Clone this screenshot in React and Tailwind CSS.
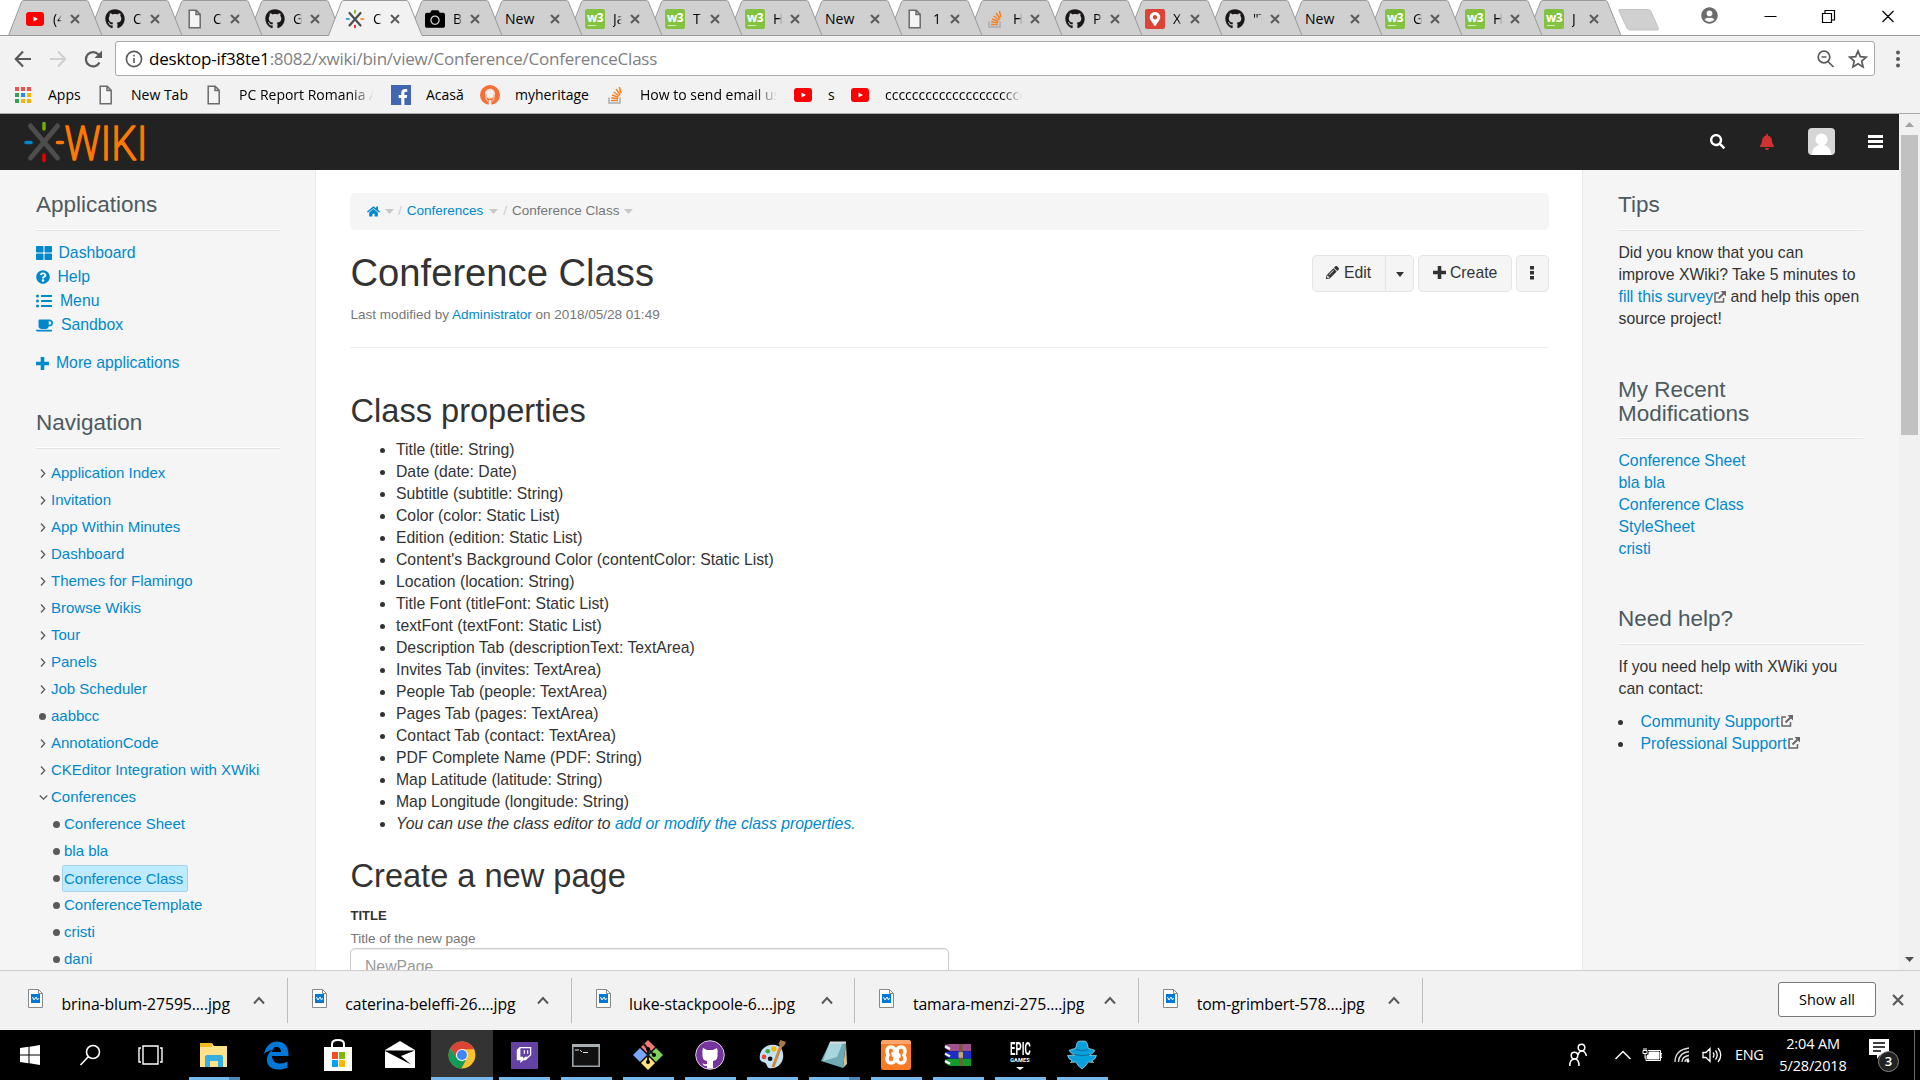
import React from "react";
import { FaGithub, FaHome, FaTwitch, FaPencilAlt, FaQuestionCircle, FaThLarge, FaListUl, FaCoffee, FaSearch, FaBell, FaUserCircle, FaFacebookF, FaCamera, FaMapMarkerAlt } from "react-icons/fa";

const FileIcon = () => (
  <svg width="20" height="20" viewBox="0 0 20 20" fill="#f4f4f4" stroke="#6b6b6b" strokeWidth="1.5">
    <path d="M4.2 1.2h7l4 4.2v13.4h-11z M11 1.2v4.4h4.2" />
  </svg>
);
const YouTube = () => (
  <svg width="20" height="20" viewBox="0 0 20 20">
    <rect x="1" y="3" width="18" height="14" rx="3" fill="#f00" />
    <path d="M8.500 7.500l4.500 2.500-4.500 2.500z" fill="#fff" />
  </svg>
);
const XMark = () => (
  <svg width="20" height="20" viewBox="0 0 20 20" strokeWidth="2.2" strokeLinecap="round">
    <path d="M4.5 4l11 12.500M15.500 4l-11 12.500" stroke="#4d4d4d" />
    <g strokeWidth="1.600"><path d="M10 1.500v2.500" stroke="#73ad0d" /><path d="M10 16.500v2" stroke="#f00" />
    <path d="M1.500 10h2.500" stroke="#08c" /><path d="M16 10h2.500" stroke="#ff7a00" /></g>
  </svg>
);
const W3 = () => (
  <span className="flex h-5 w-5 flex-col items-center overflow-hidden rounded-[2px] bg-[#84c341] pt-[3px] font-['Open_Sans',sans-serif] text-[12px] leading-[12px] font-bold tracking-[-0.5px] text-white">
    w3
    <span className="mt-px ml-[3px] h-px w-[8px] self-start bg-[#d3eab8]" />
  </span>
);
const Stack = () => (
  <svg width="20" height="20" viewBox="0 0 20 20" fill="none" strokeWidth="1.5">
    <path d="M4 12.500v5.500h11v-5.500" stroke="#a9abae" />
    <path d="M6 15.500h7M6.200 12.800l6.900.9M7 10l6.400 2.300M8.600 7l5.700 4M11 4l4.200 5.700M14.300 2l1.700 6" stroke="#f48024" />
  </svg>
);
const RedMap = () => (
  <span className="flex h-5 w-5 items-center justify-center rounded-[2px] bg-[#db4437] text-white"><FaMapMarkerAlt size={14} /></span>
);
const Heritage = () => (
  <svg width="20" height="20" viewBox="0 0 20 20">
    <circle cx="10" cy="10" r="10" fill="#f47038" />
    <circle cx="10" cy="8.800" r="4.200" fill="#f47038" stroke="#fde3d6" strokeWidth="1.600" />
    <circle cx="10" cy="8.800" r="3.800" fill="#f2f2f2" />
    <path d="M6 8.500v5l2 3M14 8.500v5l-2 3" stroke="#f9c3a9" strokeWidth="1.200" fill="none" />
    <path d="M8.700 15h2.600v5H8.700z" fill="#f2f2f2" />
  </svg>
);

const icons = {
  yt: <YouTube />,
  gh: <FaGithub size={20} color="#1b1817" />,
  file: <FileIcon />,
  xw: <XMark />,
  cam: <FaCamera size={20} color="#000" />,
  w3: <W3 />,
  so: <Stack />,
  map: <RedMap />,
};

const tabs = [
  ["yt", "(4"], ["gh", "C"], ["file", "C"], ["gh", "G"], ["xw", "C"], ["cam", "B"], [null, "New"],
  ["w3", "Ja"], ["w3", "T"], ["w3", "H"], [null, "New"], ["file", "1"], ["so", "H"], ["gh", "P"],
  ["map", "X"], ["gh", "\"T"], [null, "New"], ["w3", "G"], ["w3", "H"], ["w3", "J"],
];

function Tab({ icon, label, active, order }) {
  return (
    <div className={"relative h-[36px] shrink-0 " + (order === 12 ? "w-[79px]" : "w-[80px]")} style={{ zIndex: order }}>
      <svg className="absolute top-0 left-0" width="95" height="36" viewBox="0 0 95 36">
        <path d="M0.500 35.500L13.500 2Q14.200 .5 16 .5H78Q79.800 .5 80.500 2L94 35.500" fill={active ? "#f2f2f2" : "#d0d0d0"} stroke="#9a9a9a" />
        {active ? <path d="M1 35.500H94" stroke="#f2f2f2" /> : <path d="M0 35.500H95" stroke="#9a9a9a" />}
      </svg>
      <div className="relative flex h-[37px] items-center pl-[17px]">
        {icon && <span className="w-5 shrink-0">{icons[icon]}</span>}
        <span className={icon ? "ml-2 w-[9px] overflow-hidden text-[14px] text-black [mask-image:linear-gradient(90deg,#000_60%,transparent)]" : "w-[36px] overflow-hidden text-[14px] text-black"}>{label}</span>
        <svg className="absolute top-[14px] left-[62px]" width="10" height="10" viewBox="0 0 10 10" stroke="#5a5a5a" strokeWidth="1.900"><path d="M1 1l8 8M9 1l-8 8" /></svg>
      </div>
    </div>
  );
}

const AppsGrid = () => (
  <div className="grid w-[18px] grid-cols-[4px_4px_4px] gap-[2px] pl-[2px]">
    {["bg-[#ef5350]", "bg-[#ef5350]", "bg-[#ef5350]", "bg-[#34a05a]", "bg-[#2b87f0]", "bg-[#f5b400]", "bg-[#34a05a]", "bg-[#f5b400]", "bg-[#f5b400]"].map((c, i) => (
      <span key={i} className={"h-[4px] w-[4px] " + c} />
    ))}
  </div>
);

const bookmarks = [
  [<AppsGrid />, "Apps", "w-[83px]", ""],
  [<FileIcon />, "New Tab", "w-[108px]", ""],
  [<FileIcon />, "PC Report Romania A", "w-[187px]", "mr-[15px] [mask-image:linear-gradient(90deg,#000_82%,transparent_98%)]"],
  [<span className="flex h-5 w-5 items-end justify-end bg-[#4267b2] text-white"><FaFacebookF size={16} /></span>, "Acasă", "w-[89px]", ""],
  [<Heritage />, "myheritage", "w-[125px]", ""],
  [<Stack />, "How to send email using", "w-[188px]", "mr-[16px] [mask-image:linear-gradient(90deg,#000_85%,transparent)]"],
  [<YouTube />, "s", "w-[57px]", ""],
  [<YouTube />, "cccccccccccccccccccccc", "w-[172px]", "[mask-image:linear-gradient(90deg,#000_85%,transparent)]"],
];

function Chrome() {
  return (
    <header className="h-[114px] shrink-0 border-b border-[#a9a9a9] bg-[#f2f2f2] font-['Open_Sans',sans-serif]">
      <div className="flex h-[36px] bg-white pl-[8px] shadow-[inset_0_-1px_0_#9a9a9a]">
        {tabs.map(([icon, label], i) => (
          <Tab key={i} icon={icon} label={label} active={i === 4} order={i === 4 ? 40 : 30 - i} />
        ))}
        <svg className="mt-[8px] ml-[10px] shrink-0" width="44" height="24" viewBox="0 0 44 24"><path d="M3 1.500h28q2 0 3 2l7.500 17q.5 1.500-1.500 1.500h-27q-2 0-3-2l-8-17q-.5-1.500 1-1.500z" fill="#d0d0d0" stroke="#c2c2c2" /></svg>
        <div className="mr-[26px] ml-auto flex items-start pt-[7px]">
          <FaUserCircle className="mr-[46px]" size={17} color="#6c6c6c" />
          <svg width="130" height="18" viewBox="0 0 130 18" fill="none" stroke="#000" strokeWidth="1.200">
            <path d="M0.500 9.500h12M58.500 6.500h9v9h-9zM61 6v-2.500h9.500v9.500h-3M118.500 4l11 11M129.500 4l-11 11" />
          </svg>
        </div>
      </div>
      <div className="flex h-[45px] items-center pr-[19px] pl-[14px]">
        <svg width="90" height="22" viewBox="0 0 90 22" fill="none" strokeWidth="2.200">
          <path d="M17 11H2M9 3.500L1.800 11 9 18.500" stroke="#5a5a5a" />
          <path d="M36 11H51M44 3.500L51.200 11 44 18.500" stroke="#d0d0d0" />
          <path d="M85.500 14.500A7.200 7.200 0 1 1 84.500 6.500" stroke="#5a5a5a" />
          <path d="M88 2.500V10H80.500z" fill="#5a5a5a" />
        </svg>
        <div className="ml-[11px] flex h-[35px] w-[1760px] items-center rounded-[3px] border border-[#a9a9a9] bg-white pl-[9px]">
          <svg width="18" height="18" viewBox="0 0 18 18" fill="none" stroke="#5a5a5a" strokeWidth="1.600"><circle cx="9" cy="9" r="7.600" /><path d="M9 8v5M9 4.700v1.700" /></svg>
          <span className="mt-px ml-[6px] text-[17px] tracking-[-0.22px] whitespace-nowrap text-[#808080]"><span className="text-black">desktop-if38te1</span>:8082/xwiki/bin/view/Conference/ConferenceClass</span>
          <svg className="mr-[6px] ml-auto" width="52" height="20" viewBox="0 0 52 20" fill="none" stroke="#5a5a5a" strokeWidth="1.700">
            <circle cx="8" cy="8" r="5.800" /><path d="M12 12.500l5.500 5.500M5.500 8h5" />
            <path d="M42 2l2.300 5.600 6 .5-4.600 3.900 1.400 5.900L42 14.800l-5.100 3.100 1.400-5.900-4.600-3.900 6-.5z" />
          </svg>
        </div>
        <svg className="ml-auto" width="6" height="18" viewBox="0 0 6 18" fill="#5a5a5a"><circle cx="3" cy="2.500" r="2" /><circle cx="3" cy="9" r="2" /><circle cx="3" cy="15.500" r="2" /></svg>
      </div>
      <div className="flex h-[27px] items-center pl-[13px] text-[14px] text-black">
        {bookmarks.map(([icon, label, w, cls], i) => (
          <div key={i} className={"flex shrink-0 items-center " + w}>
            <span className="mr-[15px] w-5 shrink-0">{icon}</span>
            <span className={"overflow-hidden whitespace-nowrap " + cls}>{label}</span>
          </div>
        ))}
      </div>
    </header>
  );
}

function TopNav() {
  return (
    <div className="flex h-[56px] shrink-0 items-center bg-[#222] pr-[16px] pb-px pl-[24px]">
      <svg width="124" height="44" viewBox="0 0 124 44" strokeLinecap="round" strokeWidth="3.500">
        <path d="M6.500 6l27 32M33.500 6l-27 32" stroke="#4d4d4d" strokeWidth="5" />
        <path d="M20 3.500v5.500" stroke="#73ad0d" /><path d="M20 35v5.500" stroke="#e60000" />
        <path d="M2 22.500h5" stroke="#08c" /><path d="M33.500 22.500h5" stroke="#ff7a00" />
        <text x="40.500" y="39.500" textLength="83" lengthAdjust="spacingAndGlyphs" fontFamily="Roboto" fontWeight="300" fontSize="49" fill="#ff7a00" stroke="#ff7a00" strokeWidth="1.300" strokeLinejoin="round">WIKI</text>
      </svg>
      <FaSearch className="ml-auto" size={15} color="#fff" />
      <FaBell className="ml-[34px]" size={16} color="#d03232" />
      <svg className="ml-[33px]" width="27" height="27" viewBox="0 0 27 27"><rect width="27" height="27" rx="4" fill="#d6d6d6" /><circle cx="13.500" cy="11.500" r="6" fill="#fff" /><path d="M3.500 27q1-8 7-10h6q6 2 7 10z" fill="#fff" /></svg>
      <svg className="ml-[33px]" width="15" height="15" viewBox="0 0 15 15" fill="#fff"><path d="M0 1h15v3H0zM0 6h15v3H0zM0 11h15v3H0z" /></svg>
    </div>
  );
}

const Heading = ({ children, twoLines }) => (
  <h3 className={"border-b border-[#e2e2e2] text-[22.500px] leading-[24px] text-[#4d5a5f] shadow-[inset_0_-1px_0_#fff] " + (twoLines ? "pb-[12px]" : "pb-[13px]")}>{children}</h3>
);

const apps = [
  [<FaThLarge size={16} />, "Dashboard", "gap-[6.500px]"],
  [<FaQuestionCircle size={14} />, "Help", "gap-[7.500px]"],
  [<FaListUl size={16} />, "Menu", "gap-[8px]"],
  [<FaCoffee size={17} />, "Sandbox", "gap-[8px]"],
];
const nav = ["Application Index", "Invitation", "App Within Minutes", "Dashboard", "Themes for Flamingo", "Browse Wikis", "Tour", "Panels", "Job Scheduler", "aabbcc", "AnnotationCode", "CKEditor Integration with XWiki", "Conferences"];
const subNav = ["Conference Sheet", "bla bla", "Conference Class", "ConferenceTemplate", "cristi", "dani"];

const Dot = () => <span className="h-[7px] w-[7px] rounded-full bg-[#5a5a5a]" />;

function LeftPanel() {
  return (
    <aside className="w-[316px] shrink-0 border-r border-[#e9e9e9] bg-[#f5f5f5] pt-[23px] pr-[35px] pl-[36px] text-[#0088cc]">
      <Heading>Applications</Heading>
      <ul className="mt-[10px]">
        {apps.map(([icon, label, gap]) => (
          <li key={label} className={"flex h-[24px] items-center " + gap}>{icon}{label}</li>
        ))}
      </ul>
      <div className="mt-[14px] flex h-[24px] items-center gap-[7px]">
        <svg width="13" height="13" viewBox="0 0 13 13" fill="currentColor"><path d="M4.700 0h3.600v4.700H13v3.600H8.300V13H4.700V8.300H0V4.700h4.700z" /></svg>
        More applications
      </div>
      <div className="mt-[36px]"><Heading>Navigation</Heading></div>
      <ul className="mt-[11px] text-[15px]">
        {nav.map((label) => (
          <li key={label} className="flex h-[27px] items-center">
            <span className="flex w-[15px] items-center pl-[3px]">
              {label === "aabbcc" ? <Dot /> : (
                <svg width="9" height="9" viewBox="0 0 9 9" fill="none" stroke="#5a5a5a" strokeWidth="1.300">
                  <path d={label === "Conferences" ? "M.8 2.500L4.500 6.200 8.200 2.500" : "M2 .5L5.700 4.500 2 8.500"} />
                </svg>
              )}
            </span>
            {label}
          </li>
        ))}
        {subNav.map((label) => (
          <li key={label} className="flex h-[27px] items-center pl-[17px]">
            <Dot />
            <span className={label === "Conference Class" ? "-mt-px ml-[2px] rounded-[2px] border border-[#a6d5ea] bg-[#beebff] py-[2px] pr-[4px] pl-[1px] leading-[21px]" : "ml-[4px]"}>{label}</span>
          </li>
        ))}
      </ul>
    </aside>
  );
}

const props = [
  "Title (title: String)", "Date (date: Date)", "Subtitle (subtitle: String)", "Color (color: Static List)", "Edition (edition: Static List)",
  "Content's Background Color (contentColor: Static List)", "Location (location: String)", "Title Font (titleFont: Static List)",
  "textFont (textFont: Static List)", "Description Tab (descriptionText: TextArea)", "Invites Tab (invites: TextArea)",
  "People Tab (people: TextArea)", "Pages Tab (pages: TextArea)", "Contact Tab (contact: TextArea)", "PDF Complete Name (PDF: String)",
  "Map Latitude (latitude: String)", "Map Longitude (longitude: String)",
];
const Caret = () => <svg width="9" height="5" viewBox="0 0 9 5" fill="#c8c8c8"><path d="M0 0h9L4.500 5z" /></svg>;
const Bullet = () => <span className="mt-[1px] mr-[11px] h-[5px] w-[5px] rounded-full bg-[#333]" />;
const btn = "flex h-full items-center border border-[#e4e4e4] bg-[#f5f5f5] pb-[2px]";

function Main() {
  return (
    <main className="flex-1 bg-white pt-[23px] pr-[33px] pl-[34px] text-[#333]">
      <div className="flex h-[37px] items-center rounded-[5px] bg-[#f5f5f5] pl-[17px] text-[13.500px] text-[#777]">
        <FaHome size={13} color="#08c" />
        <span className="mr-[4px] ml-[5px]"><Caret /></span><span className="mr-[5px] text-[#ccc]">/</span>
        <span className="text-[#0088cc]">Conferences</span>
        <span className="mr-[5px] ml-[6px]"><Caret /></span><span className="mr-[5px] text-[#ccc]">/</span>
        <span>Conference Class</span><span className="ml-[5px]"><Caret /></span>
      </div>
      <div className="mt-[25px] flex h-[37px] items-center">
        <h1 className="pb-[2px] pl-[0.500px] text-[38.200px] leading-[37px]">Conference Class</h1>
        <div className="ml-auto flex h-full">
          <div className={btn + " w-[74px] gap-[5px] rounded-l-[5px] pl-[13px]"}><FaPencilAlt size={13} />Edit</div>
          <div className={btn + " -ml-px w-[29px] justify-center rounded-r-[5px] pt-[4px]"}><svg width="8" height="5" viewBox="0 0 8 5" fill="#333"><path d="M0 0h8L4 5z" /></svg></div>
          <div className={btn + " ml-[4px] w-[94px] gap-[4px] rounded-[5px] pl-[14px]"}>
            <svg width="13" height="13" viewBox="0 0 13 13" fill="currentColor"><path d="M4.700 0h3.600v4.700H13v3.600H8.300V13H4.700V8.300H0V4.700h4.700z" /></svg>
            Create
          </div>
          <div className={btn + " ml-[4px] w-[33px] justify-center rounded-[5px] pr-px"}><svg width="4" height="14" viewBox="0 0 4 14" fill="#333"><path d="M0 0h4v3.500H0zM0 5h4v3.500H0zM0 10h4v3.500H0z" /></svg></div>
        </div>
      </div>
      <div className="mt-[12px] border-b border-[#eee] pb-[22px] pl-[0.500px] text-[13.540px] leading-[21px] text-[#777]">Last modified by <span className="text-[#0088cc]">Administrator</span> on 2018/05/28 01:49</div>
      <h2 className="mt-[45px] pl-[0.500px] text-[32.600px] leading-[36px]">Class properties</h2>
      <ul className="mt-[10px] pl-[30px]">
        {props.map((p) => (
          <li key={p} className="flex h-[22px] items-center"><Bullet />{p}</li>
        ))}
        <li className="flex h-[22px] items-center"><Bullet /><i>You can use the class editor to <span className="text-[#0088cc]">add or modify the class properties.</span></i></li>
      </ul>
      <h2 className="mt-[23px] pl-[0.500px] text-[32.600px] leading-[36px]">Create a new page</h2>
      <div className="mt-[12px] pl-[0.500px] text-[13px] leading-[20px] font-bold">TITLE</div>
      <div className="mt-[3px] pl-[0.500px] text-[13.540px] leading-[20px] text-[#777]">Title of the new page</div>
      <div className="-mt-px h-[38px] w-[599px] rounded-[5px] border border-[#ccc] px-[14px] text-[15.750px] leading-[36px] text-[#999] shadow-[inset_0_1px_1px_rgba(0,0,0,0.075)]">NewPage</div>
    </main>
  );
}

const Ext = () => (
  <svg className="mb-[2px] ml-[1px] inline" width="12" height="12" viewBox="0 0 12 12" fill="none" stroke="#666" strokeWidth="1.500"><path d="M5 2H1v9h8.500V7" /><path d="M4.500 7.500L9.500 2.500" strokeWidth="2" /><path d="M6.500 0H12v5.500z" fill="#666" stroke="none" /></svg>
);

function RightPanel() {
  return (
    <aside className="w-[317px] shrink-0 border-l border-[#e9e9e9] bg-[#f5f5f5] pt-[23px] pr-[36px] pl-[35px] leading-[22px] text-[#333]">
      <Heading>Tips</Heading>
      <p className="mt-[11px] pl-[0.500px] whitespace-nowrap">Did you know that you can<br />improve XWiki? Take 5 minutes to<br /><span className="text-[#0088cc]">fill this survey</span><Ext /> and help this open<br />source project!</p>
      <div className="mt-[48px]"><Heading twoLines>My Recent<br />Modifications</Heading></div>
      <ul className="mt-[11px] pl-[0.500px] text-[#0088cc]">
        {["Conference Sheet", "bla bla", "Conference Class", "StyleSheet", "cristi"].map((s) => <li key={s}>{s}</li>)}
      </ul>
      <div className="mt-[47px]"><Heading>Need help?</Heading></div>
      <p className="mt-[11px] pl-[0.500px]">If you need help with XWiki you<br />can contact:</p>
      <ul className="mt-[11px] text-[#0088cc]">
        {["Community Support", "Professional Support"].map((s) => (
          <li key={s} className="flex items-center whitespace-nowrap"><span className="mr-[17.500px] h-[5px] w-[5px] rounded-full bg-[#333]" />{s}<Ext /></li>
        ))}
      </ul>
    </aside>
  );
}

const downloads = ["brina-blum-27595....jpg", "caterina-beleffi-26....jpg", "luke-stackpoole-6....jpg", "tamara-menzi-275....jpg", "tom-grimbert-578....jpg"];

function Downloads() {
  return (
    <div className="flex h-[60px] shrink-0 items-center border-t border-[#ccc] bg-[#f2f2f2] pl-[4px] font-['Open_Sans',sans-serif] text-black">
      {downloads.map((d) => (
        <div key={d} className="flex h-[45px] w-[283.800px] shrink-0 items-center border-r border-[#bdbdbd] pl-[24px]">
          <svg className="mb-[4px]" width="15" height="19" viewBox="0 0 15 19"><path d="M.5.5h10l4 4v14H.500z" fill="#fff" stroke="#888" /><path d="M10.500.5v4h4" fill="none" stroke="#888" /><rect x="3" y="5" width="9" height="9" fill="#0078d7" /><path d="M4.500 8l1.500 3 2-3 1.500 3 1-2" stroke="#fff" fill="none" /></svg>
          <span className="mt-[8px] ml-[18.500px] w-[172.500px] text-[15.800px] whitespace-nowrap tracking-[-0.100px]">{d}</span>
          <svg className="ml-[19px]" width="12" height="9" viewBox="0 0 12 9" fill="none" stroke="#5a5a5a" strokeWidth="2"><path d="M1 7.500L6 2l5 5.500" /></svg>
        </div>
      ))}
      <div className="mr-[16px] mb-[2px] ml-auto flex h-[35px] w-[98px] items-center justify-center rounded-[3px] border border-[#777] bg-white text-[14.500px]">Show all</div>
      <svg className="mr-[16px] mb-px" width="12" height="12" viewBox="0 0 12 12" stroke="#5a5a5a" strokeWidth="2.200"><path d="M1 1l10 10M11 1L1 11" /></svg>
    </div>
  );
}

const taskIcons = [
  [<svg width="30" height="30" viewBox="0 0 30 30"><path d="M1 3h12l2 3h13v21H1z" fill="#ffe28a" /><path d="M1 3h12v4H1z" fill="#f5b91f" /><path d="M6 27V17q0-2 2-2h14q2 0 2 2v10h-5v-6h-8v6z" fill="#35aee2" /></svg>, "split"],
  [<svg width="28" height="30" viewBox="0 0 28 30"><path d="M2 14C4 4 11 1.500 15 1.500c8 0 12 6 11.500 14.500H10c0 5 4 7.500 8 7.500 3 0 5.500-.8 7.500-2v6c-3 1.500-6 2-9 2C8 29.500 4 24 5 18c.8-4 3-6.500 6-8-3 .2-6.500 1.500-9 4zm8-2h9c0-3-1.500-5-4.500-5S10.500 9 10 12z" fill="#0078d7" /></svg>, ""],
  [<svg width="30" height="34" viewBox="0 0 30 34"><path d="M9 10V6q0-4 6-4t6 4v4" fill="none" stroke="#fff" strokeWidth="2" /><path d="M1 9h28v24H1z" fill="#fff" /><path d="M9 14h6v7H9z" fill="#f25022" /><path d="M16 14h6v7h-6z" fill="#7fba00" /><path d="M9 22h6v7H9z" fill="#00a4ef" /><path d="M16 22h6v7h-6z" fill="#ffb900" /></svg>, ""],
  [<svg width="32" height="30" viewBox="0 0 32 30"><path d="M1 10L16 1l15 9v18H1z" fill="#fff" /><path d="M1 10.500h30L17 16l10 8.500L1 11z" fill="#000" /></svg>, ""],
  [<svg width="28" height="28" viewBox="0 0 48 48"><circle cx="24" cy="24" r="23" fill="#fbc02d" /><path d="M24 1a23 23 0 0 1 20.500 13H24L15 29 4 12.500A23 23 0 0 1 24 1z" fill="#db4437" /><path d="M4 12.500L15 29l9 5 8-4-9 17A23 23 0 0 1 4 12.500z" fill="#0f9d58" /><circle cx="24" cy="24" r="10.500" fill="#f1f1f1" /><circle cx="24" cy="24" r="8.500" fill="#4285f4" /></svg>, "active"],
  [<span className="flex h-[27px] w-[27px] items-center justify-center bg-[#6441a5] text-white"><FaTwitch size={16} /></span>, "on"],
  [<svg width="28" height="23" viewBox="0 0 28 23"><path d="M.8.8h26.400v21.400H.8z" fill="#111" stroke="#9aa4aa" strokeWidth="1.600" /><path d="M0 0h28v3H0z" fill="#a9b1b5" /><path d="M3 6h4M8 6l2 2M11 8.500h5" stroke="#ddd" /></svg>, "on"],
  [<svg width="32" height="32" viewBox="0 0 32 32"><path d="M16 1l7 7-7 7-7-7z" fill="#f37a78" /><path d="M24 9l7 7-7 7-7-7z" fill="#7fd15a" /><path d="M16 17l7 7-7 7-7-7z" fill="#ffe27a" /><path d="M8 9l7 7-7 7-7-7z" fill="#7aa7f8" /><path d="M11 4l5 6v12M16 10l6 6" stroke="#1b1b1b" strokeWidth="2" fill="none" /><circle cx="16" cy="23" r="2" /><circle cx="22" cy="16" r="2" /><circle cx="16" cy="10" r="2" /></svg>, "on"],
  [<svg width="30" height="30" viewBox="0 0 30 30"><circle cx="15" cy="15" r="14.300" fill="#75359c" stroke="#d9cfe2" /><path d="M8 8l4 2h6l4-2q1 3 .5 5 1 7-4.500 8v7.500h-6V26q-4 .5-4.500-3 2 2 4.500 1v-3q-5.500-1-4.500-8-.5-2 .5-5z" fill="#fff" /></svg>, "on"],
  [<svg width="30" height="30" viewBox="0 0 30 32"><path d="M2 20C1 10 9 5 16 5c8 0 11 6 11 12S22 31 13 30c-4 0-3-5-6-6s-4-1-5-4z" fill="#c3e2f5" /><circle cx="6.500" cy="18" r="2.500" fill="#e3483d" /><circle cx="10.500" cy="12" r="2.500" fill="#3fa845" /><circle cx="17" cy="9.500" r="2.800" fill="#f5b700" /><circle cx="13" cy="20" r="2.500" fill="#111" /><path d="M16 29L25 5" stroke="#d08a3c" strokeWidth="3.200" /><path d="M22 4l2-4 6 2-2 4-3 2z" fill="#a9774a" /></svg>, "on"],
  [<svg width="28" height="28" viewBox="0 0 28 28"><path d="M10 1h16l-3 26L1 20z" fill="#6fa9b6" /><path d="M10 1h13l-6 15-14 4z" fill="#a9d6de" /><path d="M26 2l1 21-4 4z" fill="#d6c48a" /><path d="M10 1.500h16" stroke="#ddd" strokeWidth="2" /></svg>, "split"],
  [<svg width="30" height="30" viewBox="0 0 30 30"><rect width="30" height="30" rx="2.500" fill="#fb7a24" /><path d="M0 4V2.500Q0 0 2.500 0h25Q30 0 30 2.500V4z" fill="#fda66b" /><path d="M14 12c0-4-2-5-4-5-4 0-5 4-3 8-2 4-1 8 3 8s4-3 4-6M16 18c0 4 2 5 4 5 4 0 5-4 3-8 2-4 1-8-3-8s-4 3-4 6M12 13.500q0 3 3 1.500t3 1.500" fill="none" stroke="#fff" strokeWidth="3.600" strokeLinecap="round" /></svg>, "on"],
  [<svg width="28" height="24" viewBox="0 0 28 26" preserveAspectRatio="none"><path d="M1 2l5-1h21v8H6l-5-3z" fill="#a0508f" /><path d="M1 10l5-1h21v8H6l-5-3z" fill="#1b2fc4" /><path d="M1 18l5-1h21v8H6l-5-3z" fill="#139a2b" /><path d="M1 3.500l5 3M1 11.500l5 3M1 19.500l5 3" stroke="#eee" strokeWidth="2.500" /><path d="M15 1h3.500v24H15z" fill="#7b5a33" /><path d="M14.500 10h4.500v6h-4.500z" fill="#c9a768" /></svg>, "on"],
  [<span className="flex flex-col items-center font-[Roboto,sans-serif] leading-none font-bold text-white"><span className="-mx-2 scale-x-[.53] text-[18px]">EPIC</span><span className="text-[5.500px] tracking-[0.200px]">GAMES</span><svg className="mt-[4px]" width="8" height="3" viewBox="0 0 8 3" fill="#fff"><path d="M0 0h8L4 3z" /></svg></span>, "on"],
  [<svg width="32" height="30" viewBox="0 0 32 30" fill="#0aa0dc"><path d="M9.500 8.500L11 3q.5-2 3-2h4q2.500 0 3 2l1.500 5.500q4 .5 6.500 2-2 3.500-6 4.500l7.500.5q-1 4-4.500 5l1.500 2-5.500-.5-2 3.500-4 3.500-4-3.500-2-3.500-5.500.5 1.500-2q-3.500-1-4.500-5L9 15q-4-1-6-4.500 2.500-1.500 6.500-2z" stroke="#d9f2fc" strokeWidth=".6" /><path d="M9.500 9.500q6.500 2.500 13 0M8 14.500q8 2.500 16 0" fill="none" stroke="#0b6f9c" /></svg>, "on"],
];

function Taskbar() {
  return (
    <footer className="flex h-[50px] shrink-0 bg-black font-['Open_Sans',sans-serif] text-white">
      <div className="flex w-[60px] items-center justify-center"><svg width="20" height="20" viewBox="0 0 20 20" fill="#fff"><path d="M0 3l8.500-1.200v7.700H0zM9.500 1.700L20 0v9.500H9.500zM0 10.500h8.500v7.700L0 17zM9.500 10.500H20V20L9.500 18.300z" /></svg></div>
      <div className="flex w-[60px] items-center justify-center"><svg width="22" height="22" viewBox="0 0 22 22" fill="none" stroke="#fff" strokeWidth="1.600"><circle cx="14" cy="8" r="6.500" /><path d="M9.500 12.500L1.500 21" /></svg></div>
      <div className="flex w-[60px] items-center justify-center"><svg width="25" height="20" viewBox="0 0 25 20" fill="none" stroke="#fff" strokeWidth="1.400"><path d="M5 1h15v18H5zM3 3H1v14h2M22 3h2v14h-2" /></svg></div>
      <div className="flex pl-[3px]">
        {taskIcons.map(([icon, state], i) => (
          <div key={i} className={"flex h-[50px] w-[62px] shrink-0 flex-col items-center " + (state === "active" ? "bg-[#333]" : "")}>
            <div className="flex h-[47px] items-center justify-center pt-[3px]">{icon}</div>
            {state !== "" && <div className={"flex h-[3px] justify-end bg-[#76b9ed] " + (state === "active" ? "w-full" : "w-[51px]")}>{state === "split" && <span className="h-full w-[11px] bg-[#4f86b5]" />}</div>}
          </div>
        ))}
      </div>
      <div className="ml-auto flex items-center">
        <svg width="18" height="24" viewBox="0 0 18 24" fill="none" stroke="#fff" strokeWidth="1.500"><circle cx="12.500" cy="4.500" r="3.300" /><path d="M9 12q1-4 4-4t4.500 5" /><circle cx="5.500" cy="12.500" r="3.300" /><path d="M.8 23q0-7 4.700-7t4.500 7" /></svg>
        <svg className="ml-[28px]" width="16" height="10" viewBox="0 0 16 10" fill="none" stroke="#fff" strokeWidth="1.500"><path d="M.5 9L8 1.500 15.500 9" /></svg>
        <svg className="ml-[11px]" width="20" height="16" viewBox="0 0 20 16" fill="none" stroke="#fff"><path d="M6 3.500h12.500v10H4v-5" /><path d="M7 5h10v7H5.500V8H7z" fill="#fff" /><path d="M18.500 6.500h1.500v4h-1.500M1 3.500h4v3H1zM2 1v2M4 1v2M3 6.500v5" /></svg>
        <svg className="ml-[12px]" width="16" height="16" viewBox="0 0 16 16" fill="none" stroke="#ddd" strokeWidth="1.300"><path d="M1 15Q1 3 15 1M4.500 15Q4.500 6 15 4.500M8 15Q8 9.500 15 8.500M11 15q0-3 4-3" /><circle cx="14" cy="14" r="1.500" fill="#fff" stroke="none" /></svg>
        <svg className="ml-[12px]" width="21" height="18" viewBox="0 0 21 18" fill="none" stroke="#fff" strokeWidth="1.300"><path d="M1 6.500h3l4-4v13l-4-4H1zM11 6.500q2 2.500 0 5M13.500 4.500q3.500 4.500 0 9M16 2q5.500 7 0 14" /></svg>
        <span className="ml-[12px] w-[29px] text-[14.500px] tracking-[-0.400px]">ENG</span>
        <div className="ml-[13px] flex w-[72px] flex-col items-center text-[14.500px] leading-[22px] tracking-[-0.150px] whitespace-nowrap"><span>2:04 AM</span><span>5/28/2018</span></div>
        <div className="relative ml-[20px] h-[34px] w-[32px]">
          <svg width="20" height="22" viewBox="0 0 20 22"><path d="M0 1h20v16H11l-3 4v-4H0z" fill="#fff" /><path d="M4 5h12M4 9h12M4 13h8" stroke="#000" strokeWidth="1.300" /></svg>
          <span className="absolute top-[13px] left-[9px] flex h-[21px] w-[21px] items-center justify-center rounded-full border border-[#888] bg-[#222] text-[13px] font-semibold">3</span>
        </div>
        <div className="ml-[13px] h-full w-[6px] border-l border-[#666]" />
      </div>
    </footer>
  );
}

export default function App() {
  return (
    <div className="flex h-[1080px] w-[1920px] flex-col overflow-hidden bg-white font-['Liberation_Sans',Arial,sans-serif] text-[15.750px]">
      <Chrome />
      <div className="flex h-[856px] shrink-0 overflow-hidden">
        <div className="flex w-[1899px] shrink-0 flex-col overflow-hidden">
          <TopNav />
          <div className="flex min-h-0 flex-1">
            <LeftPanel />
            <Main />
            <RightPanel />
          </div>
        </div>
        <div className="flex w-[21px] flex-col items-center bg-[#f1f1f1]">
          <div className="flex h-[21px] items-center"><svg width="9" height="5" viewBox="0 0 9 5" fill="#a3a3a3"><path d="M0 5h9L4.500 0z" /></svg></div>
          <div className="h-[300px] w-[17px] bg-[#c1c1c1]" />
          <div className="mt-auto flex h-[21px] items-center"><svg width="9" height="5" viewBox="0 0 9 5" fill="#505050"><path d="M0 0h9L4.500 5z" /></svg></div>
        </div>
      </div>
      <Downloads />
      <Taskbar />
    </div>
  );
}
